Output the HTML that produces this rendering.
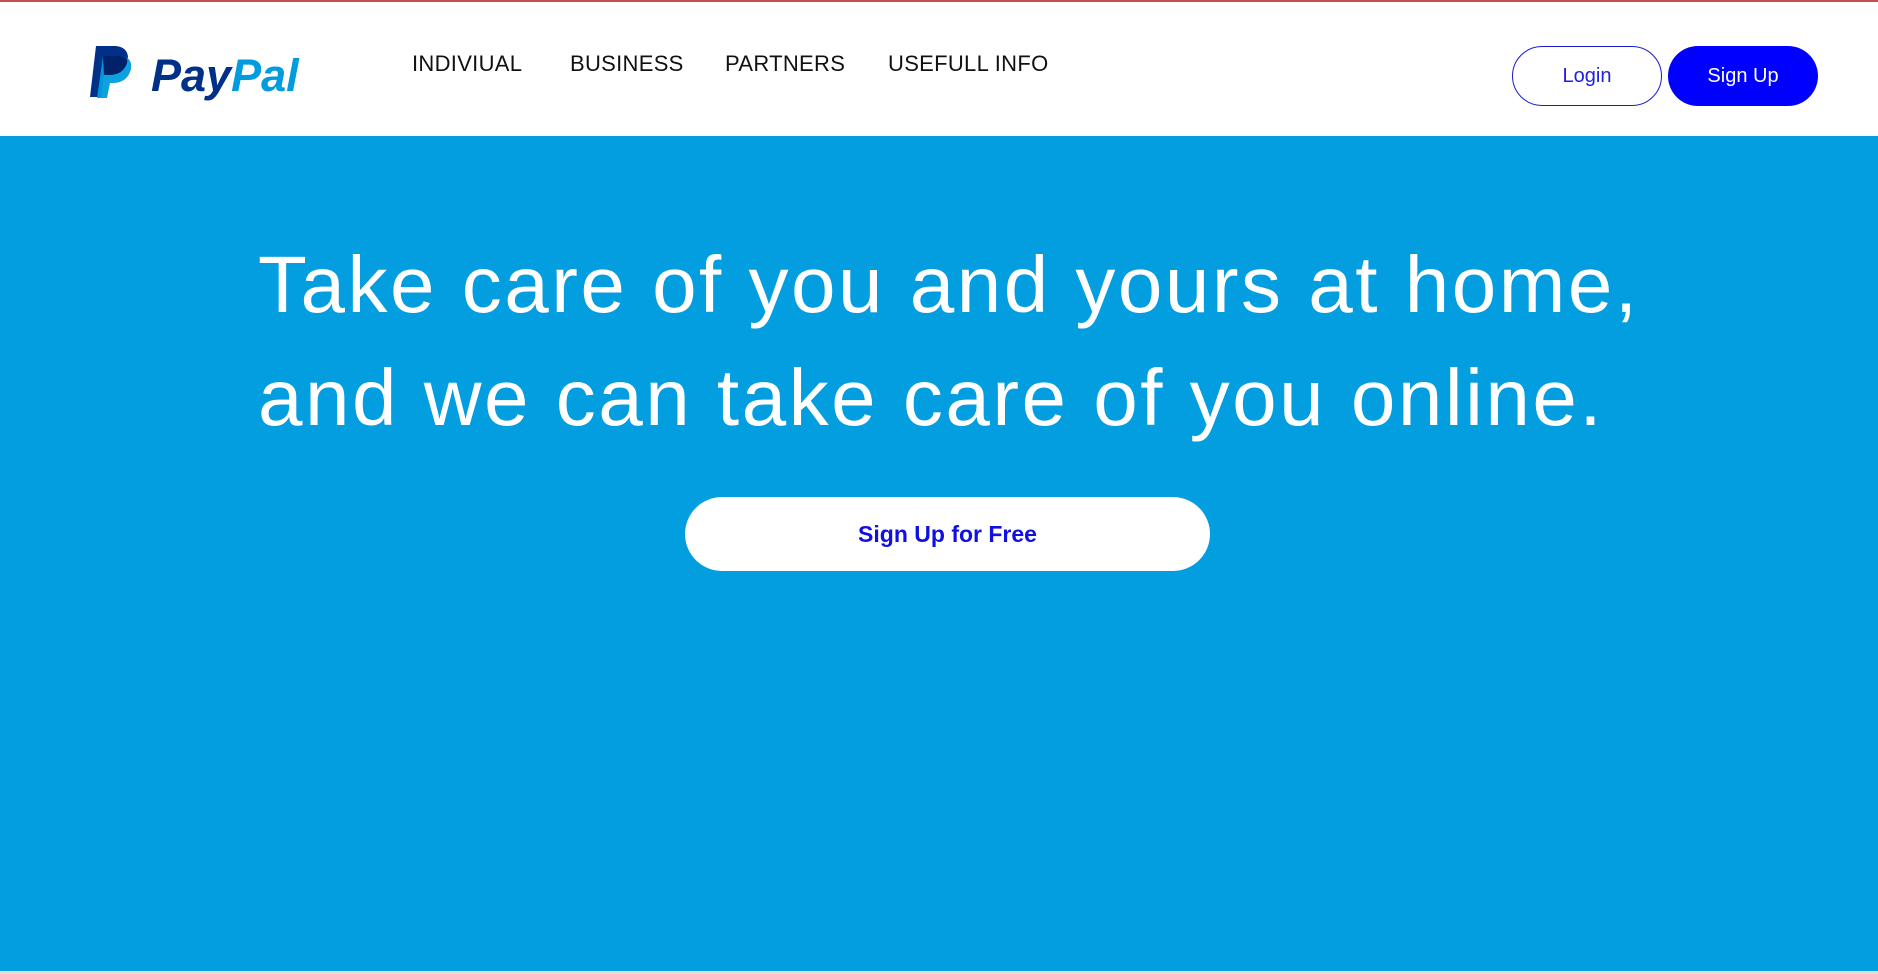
<!DOCTYPE html>
<html><head><meta charset="utf-8"><style>
*{margin:0;padding:0;box-sizing:border-box}
body{width:1878px;height:974px;background:#fff;font-family:"Liberation Sans",sans-serif;position:relative;overflow:hidden}
.top{position:absolute;left:0;top:0;width:100%;height:2px;background:#c0504d}
.hero{position:absolute;left:0;top:136px;width:100%;height:835px;background:#039ee0}
.foot{position:absolute;left:0;top:971px;width:100%;height:3px;background:#ddd}
.nav{position:absolute;top:51px;font-size:22px;color:#111;letter-spacing:0.3px}
.btn{position:absolute;top:46px;height:60px;width:150px;border-radius:30px;font-size:20px;display:flex;align-items:center;justify-content:center}
h1{position:absolute;left:258px;top:228px;font-size:80px;font-weight:normal;color:#fff;line-height:113px;white-space:nowrap;letter-spacing:2.5px}
.cta{position:absolute;left:685px;top:497px;width:525px;height:74px;border-radius:37px;background:#fff;color:#1010e0;font-weight:bold;font-size:23px;display:flex;align-items:center;justify-content:center}
</style></head><body>
<div class="top"></div>
<svg style="position:absolute;left:88px;top:44px" width="50" height="56" viewBox="0 0 50 56">
<path d="M8 2 H26 C38 2 42 10 39 19 C36 28 29 31 21 31 H16 L13 53 H2 Z" fill="#003087"/>
<path d="M15 12 H32 C43 12 45 21 42 28 C39 36 32 39 25 39 H22 L19 54 H9 Z" fill="#009cde" opacity="0.95"/>
<path d="M15 12 H32 C38 12 40 15 39 19 C36 28 29 31 21 31 H16 Z" fill="#012169"/>
</svg>
<div style="position:absolute;left:151px;top:50px;font-size:45px;font-weight:bold;font-style:italic"><span style="color:#003087">Pay</span><span style="color:#009cde">Pal</span></div>
<div class="nav" style="left:412px">INDIVIUAL</div>
<div class="nav" style="left:570px">BUSINESS</div>
<div class="nav" style="left:725px">PARTNERS</div>
<div class="nav" style="left:888px">USEFULL INFO</div>
<div class="btn" style="left:1512px;border:1.5px solid #1a1ad0;color:#2020e0">Login</div>
<div class="btn" style="left:1668px;background:#0000ff;color:#fff">Sign Up</div>
<div class="hero"></div>
<h1>Take care of you and yours at home,<br>and we can take care of you online.</h1>
<div class="cta">Sign Up for Free</div>
<div class="foot"></div>
</body></html>
